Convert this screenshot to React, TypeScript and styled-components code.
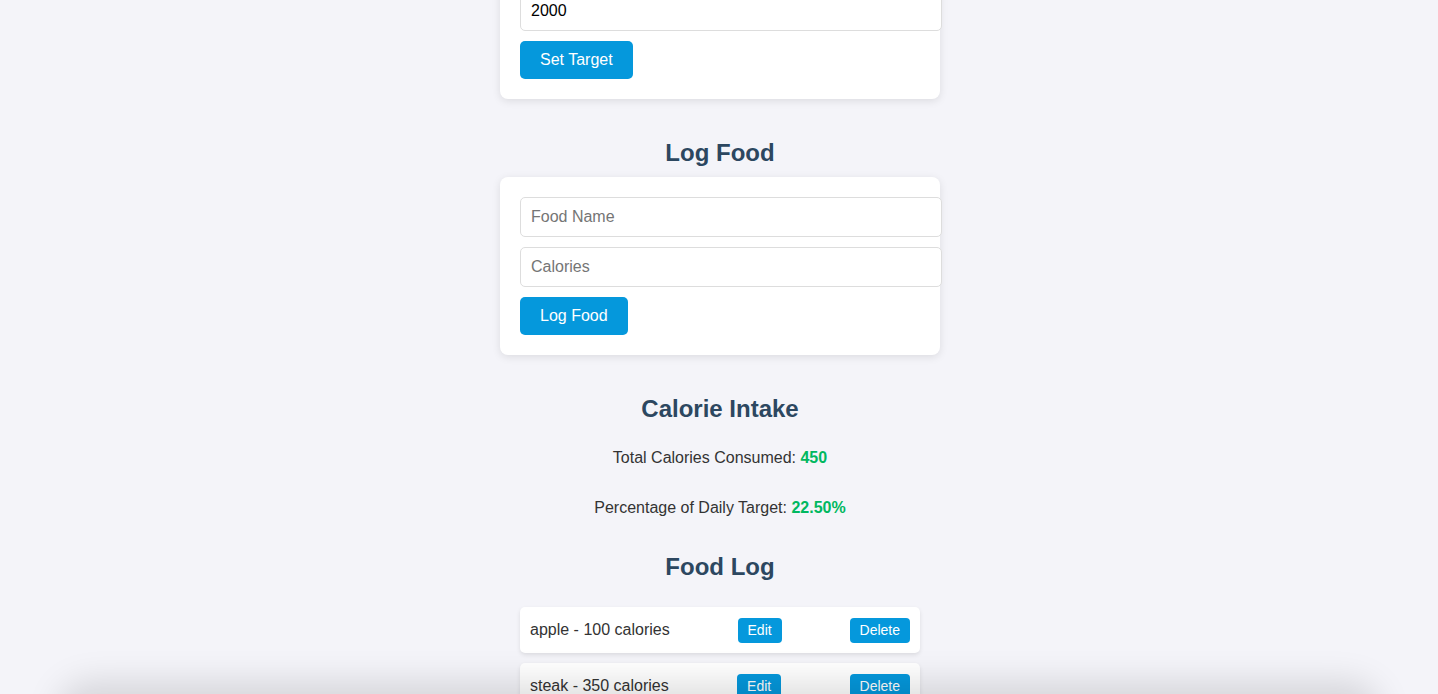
import * as React from "react";
import styled, { createGlobalStyle } from "styled-components";

type FoodItem = { id: number; name: string; calories: number };

const initialFoods: FoodItem[] = [
  { id: 1, name: "apple", calories: 100 },
  { id: 2, name: "steak", calories: 350 },
];

const GlobalStyle = createGlobalStyle`
  html, body {
    margin: 0;
    padding: 0;
    background: #f4f4f9;
    font-family: "Liberation Sans", Arial, Helvetica, sans-serif;
    color: #333;
    overflow: hidden;
  }
`;

const Page = styled.main`
  display: flex;
  flex-direction: column;
  align-items: center;
  margin-top: -29px;
  padding-left: 2px;
`;

const Column = styled.div`
  width: 440px;
  display: flex;
  flex-direction: column;
`;

const Card = styled.section`
  background: #fff;
  border-radius: 8px;
  padding: 20px;
  box-shadow: 0 2px 8px rgba(0, 0, 0, 0.1);
  margin-bottom: 20px;
`;

const Heading = styled.h2`
  margin: 20px 0 10px;
  text-align: center;
  font-size: 24px;
  font-weight: bold;
  color: #2c4760;
`;

const Input = styled.input`
  display: block;
  width: 100%;
  padding: 10px;
  margin: 0 0 10px;
  font-family: inherit;
  font-size: 16px;
  line-height: 18px;
  color: #000;
  border: 1px solid #ddd;
  border-radius: 5px;
  background: #fff;

  &::placeholder {
    color: #757575;
  }
`;

const Button = styled.button<{ $small?: boolean }>`
  background: #0598dc;
  color: #fff;
  border: none;
  font-family: inherit;
  cursor: pointer;
  font-size: ${props => (props.$small ? "14px" : "16px")};
  line-height: ${props => (props.$small ? "16px" : "18px")};
  padding: ${props => (props.$small ? "4px 10px 5px" : "10px 20px")};
  border-radius: ${props => (props.$small ? "4px" : "5px")};
`;

const Stat = styled.p`
  margin: 16px 0;
  text-align: center;
  font-size: 16px;
  line-height: 18px;
  color: #333;
`;

const Highlight = styled.span`
  color: #00b860;
  font-weight: bold;
`;

const List = styled.ul`
  list-style: none;
  margin: 16px 0 0;
  padding: 0 20px;
`;

const Row = styled.li`
  display: flex;
  align-items: center;
  justify-content: space-between;
  background: #fff;
  padding: 10px;
  margin-bottom: 10px;
  border-radius: 5px;
  box-shadow: 0 2px 4px rgba(0, 0, 0, 0.1);
  font-size: 16px;
  line-height: 26px;
`;

const WindowShade = styled.div`
  position: fixed;
  left: 70px;
  right: 70px;
  bottom: -40px;
  height: 40px;
  border-radius: 40px;
  box-shadow: 0 0 34px 12px rgba(0, 0, 0, 0.13);
  pointer-events: none;
`;

const App = (): JSX.Element => {
  const [target, setTarget] = React.useState("2000");
  const [foods] = React.useState<FoodItem[]>(initialFoods);

  const total = foods.reduce((sum, f) => sum + f.calories, 0);
  const percent = ((total / Number(target || 1)) * 100).toFixed(2);

  return (
    <>
      <GlobalStyle />
      <Page>
        <Column>
          <Card>
            <Input
              type="number"
              value={target}
              onChange={e => setTarget(e.target.value)}
            />
            <Button>Set Target</Button>
          </Card>

          <Heading>Log Food</Heading>
          <Card>
            <Input type="text" placeholder="Food Name" />
            <Input type="number" placeholder="Calories" />
            <Button>Log Food</Button>
          </Card>

          <Heading>Calorie Intake</Heading>
          <Stat>
            Total Calories Consumed: <Highlight>{total}</Highlight>
          </Stat>
          <Stat>
            Percentage of Daily Target: <Highlight>{percent}%</Highlight>
          </Stat>

          <Heading>Food Log</Heading>
          <List>
            {foods.map(food => (
              <Row key={food.id}>
                <span>
                  {food.name} - {food.calories} calories
                </span>
                <Button $small>Edit</Button>
                <Button $small>Delete</Button>
              </Row>
            ))}
          </List>
        </Column>
      </Page>
      <WindowShade />
    </>
  );
};

export default App;
